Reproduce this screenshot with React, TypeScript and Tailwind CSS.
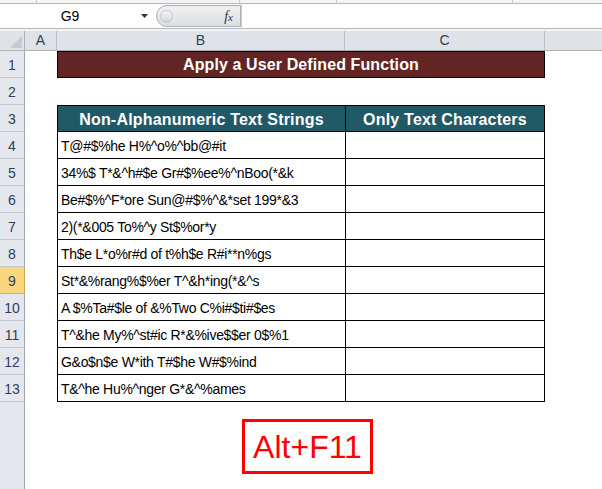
const DATA = [
  "T@#$%he H%^o%^bb@#it",
  "34%$ T*&^h#$e Gr#$%ee%^nBoo(*&k",
  "Be#$%^F*ore Sun@#$%^&*set 199*&3",
  "2)(*&005 To%^y St$%or*y",
  "Th$e L*o%r#d of t%h$e R#i**n%gs",
  "St*&%rang%$%er T^&h*ing(*&^s",
  "A $%Ta#$le of &%Two C%i#$ti#$es",
  "T^&he My%^st#ic R*&%ive$$er 0$%1",
  "G&o$n$e W*ith T#$he W#$%ind",
  "T&^he Hu%^nger G*&^%ames",
];

function RowHead({ n }: { n: number }) {
  const selected = n === 9;
  return (
    <div
      className={`w-[25px] shrink-0 flex items-center justify-center pt-[3px] border-r border-b text-[14px] text-[#2c3f5c] ${
        selected ? "bg-[#f8d77e] border-r-[#c9a84f] border-b-[#d6b560]" : "bg-[#e4e7eb] border-r-[#9da5ae] border-b-[#c4c9cf]"
      }`}
    >
      {n}
    </div>
  );
}

export default function App() {
  return (
    <div className="w-[602px] h-[489px] overflow-hidden bg-white font-['Liberation_Sans',sans-serif] text-black">
      {/* ribbon edge */}
      <div className="h-[4px] flex bg-[#f3f4f6] border-b border-[#b3b9c1]">
        <div className="w-[37px] border-r border-[#c7ccd2]" />
        <div className="w-[203px] border-r border-[#c7ccd2]" />
        <div className="w-[97px] border-r border-[#c7ccd2]" />
        <div className="w-[176px] border-r border-[#c7ccd2]" />
      </div>

      {/* formula bar */}
      <div className="h-[25px] flex items-center border-b border-[#b3b9c1] bg-white">
        <div className="w-[156px] h-full flex items-center">
          <span className="w-[140px] text-center text-[14px] pt-[1px]">G9</span>
          <svg width="8" height="5" viewBox="0 0 8 5" className="ml-[1px]">
            <path d="M0 0 L7 0 L3.5 4 Z" fill="#333" />
          </svg>
        </div>
        <div className="w-[85px] h-[22px] flex items-center rounded-l-full border border-[#a9afb7] bg-gradient-to-b from-[#f0f1f3] to-[#dcdfe3]">
          <div className="ml-[3px] w-[13px] h-[13px] rounded-full bg-gradient-to-b from-[#f7f8f9] to-[#cfd3d8] border border-[#c4c8ce]" />
          <span className="ml-auto mr-[7px] text-[14px] italic font-['Liberation_Serif',serif] text-[#333]">
            f<span className="text-[11px]">x</span>
          </span>
        </div>
        <div className="flex-1 h-full bg-white border-l border-[#c7ccd2]" />
      </div>
      <div className="h-[2px] bg-[#f2f4f6]" />

      {/* column headers */}
      <div className="h-[20px] flex bg-[#dfe3e8] border-b border-[#abb2bb] text-[14px] text-[#2c3f5c]">
        <div className="w-[25px] border-r border-[#abb2bb] flex items-end justify-end p-[2px]">
          <svg width="12" height="12" viewBox="0 0 12 12">
            <path d="M12 0 L12 12 L0 12 Z" fill="#c5cad0" />
          </svg>
        </div>
        <div className="w-[32px] border-r border-[#b9bfc7] flex items-center justify-center">A</div>
        <div className="w-[288px] border-r border-[#b9bfc7] flex items-center justify-center">B</div>
        <div className="w-[200px] border-r border-[#b9bfc7] flex items-center justify-center">C</div>
        <div className="flex-1" />
      </div>

      {/* row 1 */}
      <div className="h-[27px] flex">
        <RowHead n={1} />
        <div className="w-[32px]" />
        <div className="w-[488px] h-full border border-black bg-[#632523] text-white font-bold text-[16px] flex items-center justify-center pt-[1px] tracking-[0.1px]">
          Apply a User Defined Function
        </div>
      </div>

      {/* row 2 */}
      <div className="h-[27px] flex">
        <RowHead n={2} />
      </div>

      {/* row 3 */}
      <div className="h-[27px] flex">
        <RowHead n={3} />
        <div className="w-[32px]" />
        <div className="w-[288px] h-full border-l border-t border-b border-black bg-[#215967] text-white font-bold text-[16px] flex items-center justify-center pt-[2px] tracking-[0.2px]">
          Non-Alphanumeric Text Strings
        </div>
        <div className="w-[200px] h-full border border-black bg-[#215967] text-white font-bold text-[16px] flex items-center justify-center pt-[2px] tracking-[0.2px]">
          Only Text Characters
        </div>
      </div>

      {DATA.map((text, i) => (
        <div key={i} className="h-[27px] flex">
          <RowHead n={i + 4} />
          <div className="w-[32px]" />
          <div className="w-[288px] h-full border-l border-b border-black flex items-center pl-[3px] pt-[2px] text-[14px] tracking-[-0.3px] whitespace-nowrap">
            {text}
          </div>
          <div className="w-[200px] h-full border-l border-r border-b border-black" />
        </div>
      ))}

      {/* below table */}
      <div className="flex h-[90px]">
        <div className="w-[25px] shrink-0 bg-[#e4e7eb] border-r border-[#9da5ae]" />
        <div className="pl-[217px] pt-[17px]">
          <div className="w-[131px] h-[55px] border-[3px] border-[#ff0000] flex items-center justify-center text-[#ff0000] text-[32px] leading-none">
            Alt+F11
          </div>
        </div>
      </div>
    </div>
  );
}
